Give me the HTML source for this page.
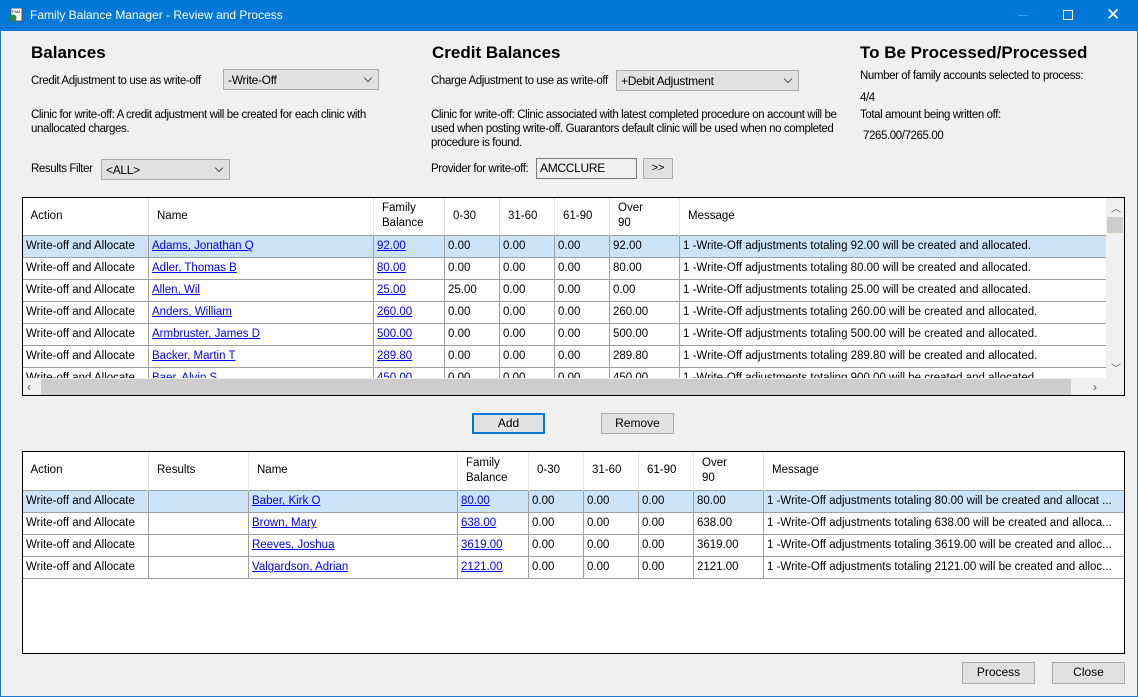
<!DOCTYPE html>
<html><head><meta charset="utf-8"><style>
*{margin:0;padding:0;box-sizing:border-box}
body{width:1138px;height:697px;background:#f0f0f0;font-family:"Liberation Sans",sans-serif;font-size:12px;color:#000;position:relative;overflow:hidden}
.a{position:absolute;white-space:nowrap}
.tb{position:absolute;left:0;top:0;width:1138px;height:31px;background:#0078d7;color:#fff;font-size:12px}
h2{position:absolute;font-size:17px;font-weight:bold;white-space:nowrap}
.lbl{position:absolute;font-size:11.5px;letter-spacing:-0.4px;line-height:14px}
.cb{position:absolute;background:#e1e1e1;border:1px solid #adadad;font-size:12px;padding:3px 4px;letter-spacing:-0.3px}
.cb:after{content:"";position:absolute;right:7px;top:5px;width:5px;height:5px;border-right:1px solid #555;border-bottom:1px solid #555;transform:rotate(45deg)}
.btn{position:absolute;background:#e1e1e1;border:1px solid #adadad;text-align:center;font-size:12px;line-height:19px}
.grid{position:absolute;background:#fff;border:1px solid #000;overflow:hidden}
table{border-collapse:collapse;table-layout:fixed;position:absolute;left:-1px;top:0;font-size:11.5px}
td{border:1px solid #a0a0a0;height:22px;padding:0 3px;white-space:nowrap;overflow:hidden}
th{font-weight:normal;text-align:left;border-right:1px solid #e6e6e6;padding:0 8px;line-height:15px;vertical-align:middle}
tr.s td{background:#cce4f7}
a{color:#0000ff;text-decoration:underline}
</style></head><body>
<div class="a" style="left:0;top:0;width:1138px;height:697px;border:1px solid #1979ca"></div>
<div class="tb">
<svg class="a" style="left:9px;top:8px" width="14" height="15"><rect x="2" y="0" width="11" height="13" fill="#fff" stroke="#556"/><text x="3" y="5" font-size="4" fill="#000">FAM</text><circle cx="4" cy="10" r="3.5" fill="#2a8a3a"/></svg>
<span class="a" style="left:30px;top:8px">Family Balance Manager - Review and Process</span>
<div class="a" style="left:1018px;top:15px;width:10px;height:1px;background:#4aa0e8"></div>
<div class="a" style="left:1063px;top:10px;width:10px;height:10px;border:1px solid #fff"></div>
<span class="a" style="left:1106px;top:5px;font-size:17px">✕</span>
</div>
<h2 style="left:31px;top:43px">Balances</h2>
<div class="lbl" style="left:31px;top:74px">Credit Adjustment to use as write-off</div>
<div class="cb" style="left:223px;top:69px;width:156px;height:21px">-Write-Off</div>
<div class="lbl" style="left:31px;top:108px">Clinic for write-off: A credit adjustment will be created for each clinic with<br>unallocated charges.</div>
<div class="lbl" style="left:31px;top:162px">Results Filter</div>
<div class="cb" style="left:101px;top:159px;width:129px;height:21px">&lt;ALL&gt;</div>

<h2 style="left:432px;top:43px">Credit Balances</h2>
<div class="lbl" style="left:431px;top:74px">Charge Adjustment to use as write-off</div>
<div class="cb" style="left:616px;top:70px;width:183px;height:21px">+Debit Adjustment</div>
<div class="lbl" style="left:431px;top:108px">Clinic for write-off: Clinic associated with latest completed procedure on account will be<br>used when posting write-off. Guarantors default clinic will be used when no completed<br>procedure is found.</div>
<div class="lbl" style="left:431px;top:162px">Provider for write-off:</div>
<div class="a" style="left:536px;top:158px;width:101px;height:21px;background:#f0f0f0;border:1px solid #7a7a7a;padding:2px 3px;font-size:12px;letter-spacing:-0.3px">AMCCLURE</div>
<div class="btn" style="left:643px;top:158px;width:30px;height:21px;font-size:11px">&gt;&gt;</div>

<h2 style="left:860px;top:43px">To Be Processed/Processed</h2>
<div class="lbl" style="left:860px;top:69px">Number of family accounts selected to process:</div>
<div class="lbl" style="left:860px;top:91px">4/4</div>
<div class="lbl" style="left:860px;top:108px">Total amount being written off:</div>
<div class="lbl" style="left:863px;top:129px">7265.00/7265.00</div>

<div class="grid" style="left:22px;top:197px;width:1103px;height:199px">
<table style="width:1085px">
<colgroup><col style="width:126px"><col style="width:225px"><col style="width:71px"><col style="width:55px"><col style="width:55px"><col style="width:55px"><col style="width:70px"><col style="width:428px"></colgroup>
<tr style="height:37px"><th>Action</th><th>Name</th><th>Family<br>Balance</th><th>0-30</th><th>31-60</th><th>61-90</th><th>Over<br>90</th><th>Message</th></tr>
<tr class="s"><td>Write-off and Allocate</td><td><a>Adams, Jonathan Q</a></td><td><a>92.00</a></td><td>0.00</td><td>0.00</td><td>0.00</td><td>92.00</td><td>1 -Write-Off adjustments totaling 92.00 will be created and allocated.</td></tr>
<tr><td>Write-off and Allocate</td><td><a>Adler, Thomas B</a></td><td><a>80.00</a></td><td>0.00</td><td>0.00</td><td>0.00</td><td>80.00</td><td>1 -Write-Off adjustments totaling 80.00 will be created and allocated.</td></tr>
<tr><td>Write-off and Allocate</td><td><a>Allen, Wil </a></td><td><a>25.00</a></td><td>25.00</td><td>0.00</td><td>0.00</td><td>0.00</td><td>1 -Write-Off adjustments totaling 25.00 will be created and allocated.</td></tr>
<tr><td>Write-off and Allocate</td><td><a>Anders, William </a></td><td><a>260.00</a></td><td>0.00</td><td>0.00</td><td>0.00</td><td>260.00</td><td>1 -Write-Off adjustments totaling 260.00 will be created and allocated.</td></tr>
<tr><td>Write-off and Allocate</td><td><a>Armbruster, James D</a></td><td><a>500.00</a></td><td>0.00</td><td>0.00</td><td>0.00</td><td>500.00</td><td>1 -Write-Off adjustments totaling 500.00 will be created and allocated.</td></tr>
<tr><td>Write-off and Allocate</td><td><a>Backer, Martin T</a></td><td><a>289.80</a></td><td>0.00</td><td>0.00</td><td>0.00</td><td>289.80</td><td>1 -Write-Off adjustments totaling 289.80 will be created and allocated.</td></tr>
<tr><td>Write-off and Allocate</td><td><a>Baer, Alvin S</a></td><td><a>450.00</a></td><td>0.00</td><td>0.00</td><td>0.00</td><td>450.00</td><td>1 -Write-Off adjustments totaling 900.00 will be created and allocated.</td></tr>
</table>
<div class="a" style="left:1083px;top:0;width:18px;height:180px;background:#f0f0f0"><div class="a" style="left:1px;top:19px;width:16px;height:16px;background:#cdcdcd"></div><span class="a" style="left:5px;top:2px;font-size:10px;color:#555">︿</span><span class="a" style="left:5px;top:162px;font-size:10px;color:#555">﹀</span></div>
<div class="a" style="left:0;top:180px;width:1083px;height:18px;background:#f0f0f0"><div class="a" style="left:18px;top:1px;width:1030px;height:16px;background:#cdcdcd"></div><span class="a" style="left:4px;top:2px;color:#555">‹</span><span class="a" style="left:1070px;top:2px;color:#555">›</span></div>
<div class="a" style="left:1083px;top:180px;width:18px;height:18px;background:#f0f0f0"></div>
</div>

<div class="btn" style="left:472px;top:413px;width:73px;height:21px;border:2px solid #0078d7;line-height:17px">Add</div>
<div class="btn" style="left:601px;top:413px;width:73px;height:21px">Remove</div>

<div class="grid" style="left:22px;top:451px;width:1103px;height:203px">
<table style="width:1103px">
<colgroup><col style="width:126px"><col style="width:100px"><col style="width:209px"><col style="width:71px"><col style="width:55px"><col style="width:55px"><col style="width:55px"><col style="width:70px"><col style="width:362px"></colgroup>
<tr style="height:38px"><th>Action</th><th>Results</th><th>Name</th><th>Family<br>Balance</th><th>0-30</th><th>31-60</th><th>61-90</th><th>Over<br>90</th><th>Message</th></tr>
<tr class="s"><td>Write-off and Allocate</td><td></td><td><a>Baber, Kirk O</a></td><td><a>80.00</a></td><td>0.00</td><td>0.00</td><td>0.00</td><td>80.00</td><td>1 -Write-Off adjustments totaling 80.00 will be created and allocat ...</td></tr>
<tr><td>Write-off and Allocate</td><td></td><td><a>Brown, Mary </a></td><td><a>638.00</a></td><td>0.00</td><td>0.00</td><td>0.00</td><td>638.00</td><td>1 -Write-Off adjustments totaling 638.00 will be created and alloca...</td></tr>
<tr><td>Write-off and Allocate</td><td></td><td><a>Reeves, Joshua </a></td><td><a>3619.00</a></td><td>0.00</td><td>0.00</td><td>0.00</td><td>3619.00</td><td>1 -Write-Off adjustments totaling 3619.00 will be created and alloc...</td></tr>
<tr><td>Write-off and Allocate</td><td></td><td><a>Valgardson, Adrian </a></td><td><a>2121.00</a></td><td>0.00</td><td>0.00</td><td>0.00</td><td>2121.00</td><td>1 -Write-Off adjustments totaling 2121.00 will be created and alloc...</td></tr>
</table>
</div>

<div class="btn" style="left:962px;top:662px;width:73px;height:22px">Process</div>
<div class="btn" style="left:1052px;top:662px;width:73px;height:22px">Close</div>
</body></html>
